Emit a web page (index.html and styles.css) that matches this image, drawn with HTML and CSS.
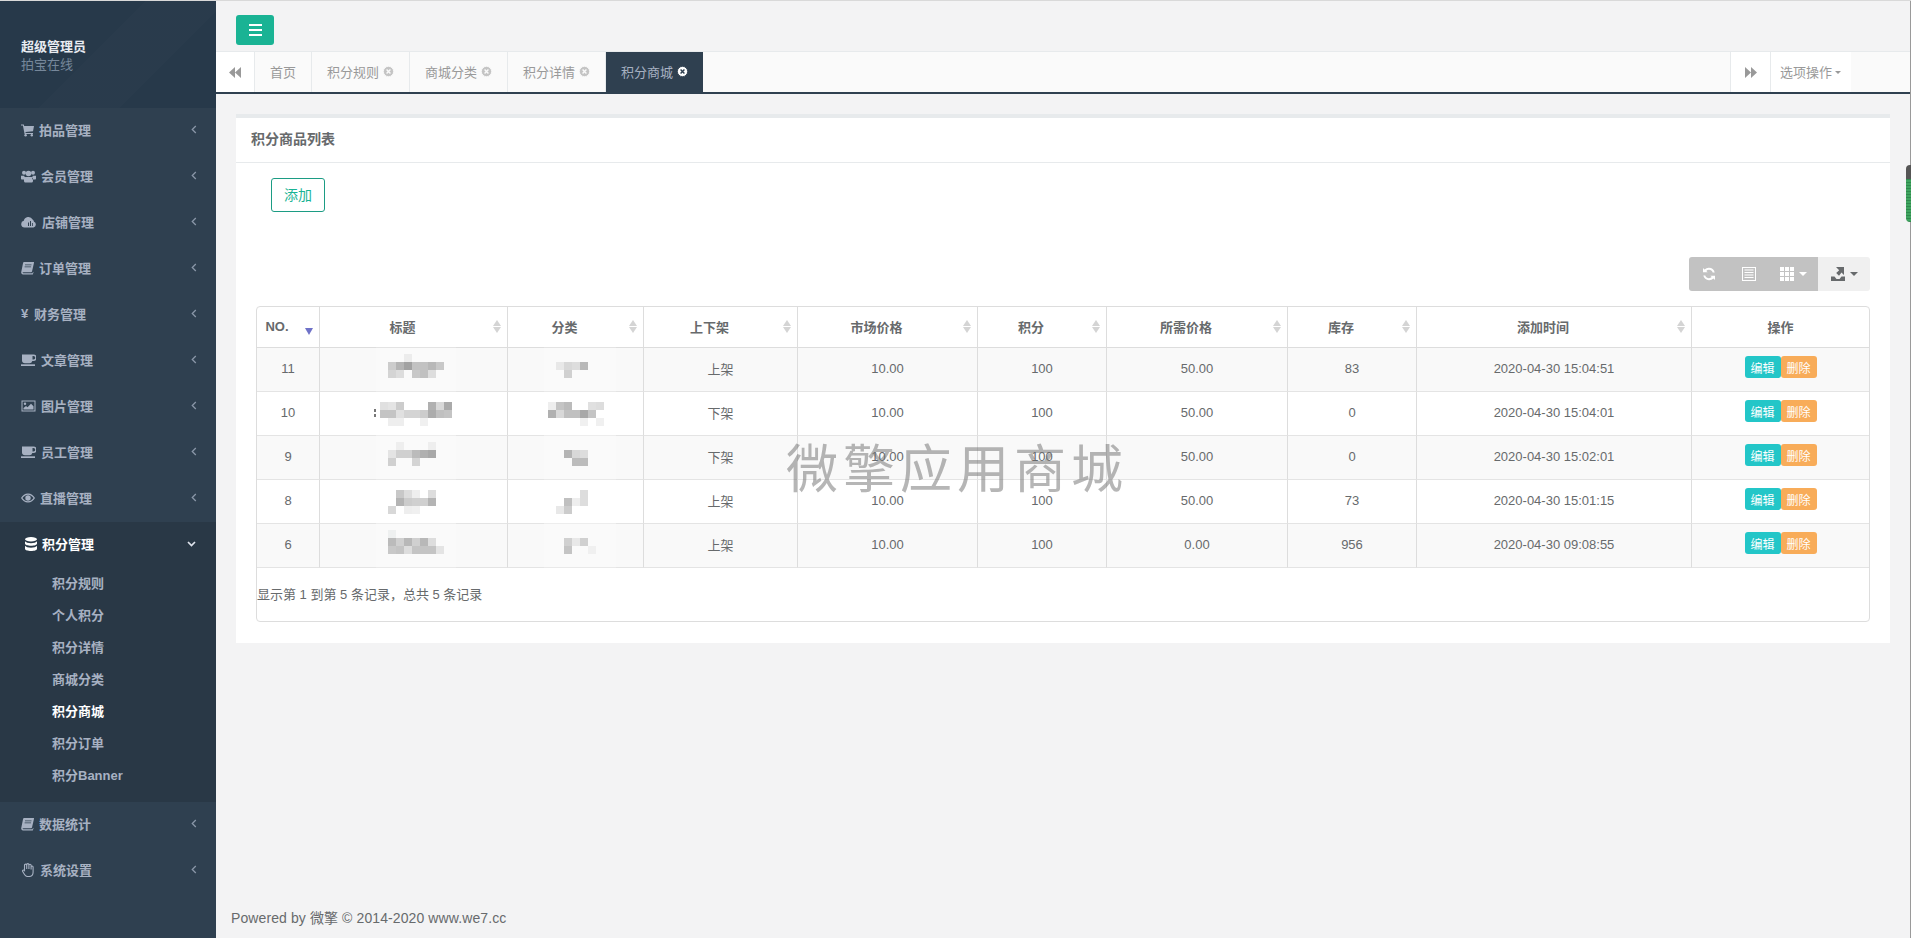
FILE: index.html
```html
<!DOCTYPE html>
<html lang="en">
<head>
    <meta charset="UTF-8">
    <title>积分商城</title>
    <link rel="stylesheet" href="styles.css">
</head>
<body>

    <!-- icon sprite -->
    <svg class="sprite" xmlns="http://www.w3.org/2000/svg">
        <symbol id="i-cart" viewBox="0 0 13 13"><path d="M0 1h2.8l.4 1.500H13l-1 5.300-7.600.8.300 1H12v1H3.600L1.900 2.100H0z"/><circle cx="4.600" cy="11.800" r="1.200"/><circle cx="10.800" cy="11.800" r="1.200"/></symbol>
        <symbol id="i-users" viewBox="0 0 15 13"><circle cx="3" cy="3.200" r="2"/><circle cx="12" cy="3.200" r="2"/><circle cx="7.500" cy="4" r="2.800"/><path d="M0 6.200h3.200L4 8.500 3.500 10H1C.3 10 0 9.500 0 9zM15 6.200h-3.200L11 8.500l.5 1.500H14c.7 0 1-.5 1-1zM4.500 7.500h6c.9 0 1.500 1 1.500 2.500v1.500c0 .8-.5 1.500-1.500 1.500h-6c-1 0-1.500-.7-1.500-1.500V10c0-1.500.6-2.500 1.500-2.500z"/></symbol>
        <symbol id="i-cloud" viewBox="0 0 16 12"><path fill-rule="evenodd" d="M3.500 11.500a3.400 3.400 0 0 1-.7-6.700A4.700 4.700 0 0 1 11.600 3.600 3 3 0 0 1 13 5.800a3 3 0 0 1-.5 5.700zM7 6.500V10h1V6.500zM9 5v5h1V5zM11 7v3h.8V7z"/></symbol>
        <symbol id="i-book" viewBox="0 0 13 13"><path fill-rule="evenodd" d="M3 .5h9.500c.5 0 .6.400.5.800l-2 8.700c-.1.400-.4.700-.9.700H2.500c-.7 0-1 .4-1 .6 0 .3.300.5.800.5h9.200l.5-1.600.5.500-.7 2.200H2c-1.100 0-1.800-.8-1.800-1.800 0-.3 0-.6.100-.8L2 1.700C2.200 1 2.500.5 3 .5zM4 3v.8h6.500V3zM3.600 5v.8h6.500V5z"/></symbol>
        <symbol id="i-coffee" viewBox="0 0 15 13"><path fill-rule="evenodd" d="M1 1h11.500a2.500 2.500 0 0 1 0 6.500h-1.200A3 3 0 0 1 8.500 9.800H4A3 3 0 0 1 1 7zM11.500 2.500v3.500h1a1.700 1.700 0 0 0 0-3.500z"/><path d="M0 10.800h14v1.700H0z"/></symbol>
        <symbol id="i-picture" viewBox="0 0 15 13"><path fill-rule="evenodd" d="M.5 1h14v11H.5zM1.500 2v9h12V2z"/><circle cx="4" cy="4.300" r="1.200"/><path d="M2.500 10V8.500L5 6.500l1.500 1.200 3.500-3.500 2.500 2.500V10z"/></symbol>
        <symbol id="i-eye" viewBox="0 0 14 10"><path fill-rule="evenodd" d="M7 .5c3 0 5.500 1.800 7 4.500-1.500 2.700-4 4.500-7 4.500S1.500 7.700 0 5C1.500 2.300 4 .5 7 .5zM7 1.700C4.800 1.700 2.800 3 1.400 5 2.800 7 4.800 8.300 7 8.300S11.200 7 12.600 5C11.200 3 9.200 1.700 7 1.700z"/><circle cx="7" cy="5" r="2.700"/></symbol>
        <symbol id="i-database" viewBox="0 0 12 14"><ellipse cx="6" cy="2.200" rx="6" ry="2.200"/><path d="M0 4.200c.8 1.300 3.300 2 6 2s5.200-.7 6-2v2.200c0 1.300-2.700 2.300-6 2.300S0 7.700 0 6.400zM0 8.800c.8 1.300 3.300 2 6 2s5.200-.7 6-2v2.900c0 1.300-2.700 2.300-6 2.300s-6-1-6-2.300z"/></symbol>
        <symbol id="i-hand" viewBox="0 0 13 14"><path fill="none" stroke="currentColor" stroke-width="1.100" d="M3 7V2.200a1.100 1.100 0 0 1 2.200 0V6V1.700a1.100 1.100 0 0 1 2.200 0V6V2.300a1.100 1.100 0 0 1 2.200 0V6.500V4a1 1 0 0 1 2 0v5c0 2.500-1.300 4.500-4 4.500H6c-1.500 0-2.200-.7-3-2L1.200 8.500C.6 7.500 2 6.300 3 7.500z"/></symbol>
        <symbol id="i-left" viewBox="0 0 6 9"><path fill="none" stroke="currentColor" stroke-width="1.300" d="M4.800 1 1.300 4.500 4.800 8"/></symbol>
        <symbol id="i-down" viewBox="0 0 9 6"><path fill="none" stroke="currentColor" stroke-width="1.700" d="M1 1l3.500 3.500L8 1"/></symbol>
        <symbol id="i-close" viewBox="0 0 12 12"><circle cx="6" cy="6" r="5.600"/><path class="x-mark" d="M3.900 3.900l4.200 4.200M8.100 3.900 3.900 8.100"/></symbol>
        <symbol id="i-back" viewBox="0 0 12 11"><path d="M6 0v11L0 5.500zM12 0v11L6 5.500z"/></symbol>
        <symbol id="i-forward" viewBox="0 0 12 11"><path d="M0 0v11l6-5.500zM6 0v11l6-5.500z"/></symbol>
        <symbol id="i-refresh" viewBox="0 0 14 14"><path d="M12.700 5.500h-2c-.6-1.700-2-2.700-3.700-2.700-1.100 0-2 .4-2.700 1.100l1.400 1.400H1V1l1.500 1.500A6.300 6.300 0 0 1 7 .8c2.900 0 5.200 2 5.700 4.700zM1.300 8.500h2c.6 1.700 2 2.700 3.700 2.700 1.100 0 2-.4 2.700-1.100L8.300 8.700H13V13l-1.500-1.500A6.300 6.300 0 0 1 7 13.200c-2.900 0-5.200-2-5.700-4.700z"/></symbol>
        <symbol id="i-list" viewBox="0 0 14 14"><path fill-rule="evenodd" d="M0 0h14v14H0zM1 1v12h12V1zM2.500 2.500h9v1h-9zM2.500 5h9v1h-9zM2.500 7.500h9v1h-9zM2.500 10h9v1h-9z"/></symbol>
        <symbol id="i-grid" viewBox="0 0 14 14"><path d="M0 0h4v4H0zM5 0h4v4H5zM10 0h4v4h-4zM0 5h4v4H0zM5 5h4v4H5zM10 5h4v4h-4zM0 10h4v4H0zM5 10h4v4H5zM10 10h4v4h-4z"/></symbol>
        <symbol id="i-export" viewBox="0 0 14 14"><path d="M0 14v-4.500h3.500L5.500 12h3l2-2.500H14V14zM5 0h8v8l-2.500-2.400L8 8.800 5.200 6l3-2.700z"/></symbol>
    </svg>

    <div class="page">
        <aside class="sidebar">
            <div class="profile">
                <strong>超级管理员</strong>
                <span>拍宝在线</span>
            </div>
            <ul class="menu">
                <li class="menu-item"><svg class="icon w13"><use href="#i-cart"/></svg><span>拍品管理</span><svg class="chev"><use href="#i-left"/></svg></li>
                <li class="menu-item"><svg class="icon w15"><use href="#i-users"/></svg><span>会员管理</span><svg class="chev"><use href="#i-left"/></svg></li>
                <li class="menu-item"><svg class="icon w16"><use href="#i-cloud"/></svg><span>店铺管理</span><svg class="chev"><use href="#i-left"/></svg></li>
                <li class="menu-item"><svg class="icon w13"><use href="#i-book"/></svg><span>订单管理</span><svg class="chev"><use href="#i-left"/></svg></li>
                <li class="menu-item"><b class="yen">¥</b><span>财务管理</span><svg class="chev"><use href="#i-left"/></svg></li>
                <li class="menu-item"><svg class="icon w15"><use href="#i-coffee"/></svg><span>文章管理</span><svg class="chev"><use href="#i-left"/></svg></li>
                <li class="menu-item"><svg class="icon w15"><use href="#i-picture"/></svg><span>图片管理</span><svg class="chev"><use href="#i-left"/></svg></li>
                <li class="menu-item"><svg class="icon w15"><use href="#i-coffee"/></svg><span>员工管理</span><svg class="chev"><use href="#i-left"/></svg></li>
                <li class="menu-item"><svg class="icon w14"><use href="#i-eye"/></svg><span>直播管理</span><svg class="chev"><use href="#i-left"/></svg></li>
                <li class="menu-group">
                    <div class="menu-item open"><svg class="icon w12"><use href="#i-database"/></svg><span>积分管理</span><svg class="chev-down"><use href="#i-down"/></svg></div>
                    <ul class="submenu">
                        <li>积分规则</li>
                        <li>个人积分</li>
                        <li>积分详情</li>
                        <li>商城分类</li>
                        <li class="current">积分商城</li>
                        <li>积分订单</li>
                        <li>积分Banner</li>
                    </ul>
                </li>
                <li class="menu-item"><svg class="icon w13"><use href="#i-book"/></svg><span>数据统计</span><svg class="chev"><use href="#i-left"/></svg></li>
                <li class="menu-item"><svg class="icon w14"><use href="#i-hand"/></svg><span>系统设置</span><svg class="chev"><use href="#i-left"/></svg></li>
            </ul>
        </aside>

        <div class="main">
            <div class="topbar">
                <button class="menu-toggle"><i></i><i></i><i></i></button>
            </div>

            <div class="tabs">
                <div class="tab-arrow"><svg class="arrow-icon"><use href="#i-back"/></svg></div>
                <div class="tab">首页</div>
                <div class="tab">积分规则<svg class="close"><use href="#i-close"/></svg></div>
                <div class="tab">商城分类<svg class="close"><use href="#i-close"/></svg></div>
                <div class="tab">积分详情<svg class="close"><use href="#i-close"/></svg></div>
                <div class="tab active">积分商城<svg class="close"><use href="#i-close"/></svg></div>
                <div class="tab-arrow right"><svg class="arrow-icon"><use href="#i-forward"/></svg></div>
                <div class="tab-options">选项操作<em class="caret"></em></div>
            </div>

            <div class="content">
                <div class="panel">
                    <h5 class="panel-title">积分商品列表</h5>
                    <div class="panel-body">
                        <button class="btn-add">添加</button>

                        <div class="toolbar">
                            <div class="tool-group">
                                <button class="tool t-refresh"><svg class="tool-icon"><use href="#i-refresh"/></svg></button>
                                <button class="tool t-list"><svg class="tool-icon"><use href="#i-list"/></svg></button>
                                <button class="tool t-grid"><svg class="tool-icon"><use href="#i-grid"/></svg><em class="caret"></em></button>
                            </div>
                            <button class="tool t-export"><svg class="tool-icon"><use href="#i-export"/></svg><em class="caret"></em></button>
                        </div>

                        <div class="table-wrap">
                            <table class="table">
                                <colgroup>
                                    <col class="c1"><col class="c2"><col class="c3"><col class="c4"><col class="c5">
                                    <col class="c6"><col class="c7"><col class="c8"><col class="c9"><col class="c10">
                                </colgroup>
                                <thead>
                                    <tr>
                                        <th class="sorted">NO.</th>
                                        <th>标题</th>
                                        <th>分类</th>
                                        <th>上下架</th>
                                        <th>市场价格</th>
                                        <th>积分</th>
                                        <th>所需价格</th>
                                        <th>库存</th>
                                        <th>添加时间</th>
                                        <th class="plain">操作</th>
                                    </tr>
                                </thead>
                                <tbody>
                                    <tr>
                                        <td>11</td>
                                        <td class="blur"><svg class="mosaic title" viewBox="-.5 0 10 6">
                                            <rect x="3" y="1" fill="#ececec"/><rect x="1" y="2" fill="#ccc"/><rect x="2" y="2" fill="#b4b4b4"/><rect x="3" y="2" fill="#a2a2a2"/><rect x="4" y="2" fill="#c2c2c2"/><rect x="5" y="2" fill="#c2c2c2"/><rect x="6" y="2" fill="#b8b8b8"/><rect x="7" y="2" fill="#c8c8c8"/><rect x="1" y="3" fill="#d4d4d4"/><rect x="2" y="3" fill="#ddd"/><rect x="4" y="3" fill="#c8c8c8"/><rect x="5" y="3" fill="#c0c0c0"/><rect x="6" y="3" fill="#ddd"/>
                                        </svg></td>
                                        <td class="blur"><svg class="mosaic cat" viewBox="-.5 0 9 6">
                                            <rect x="1" y="2" fill="#e8e8e8"/><rect x="2" y="2" fill="#d8d8d8"/><rect x="3" y="2" fill="#ddd"/><rect x="4" y="2" fill="#b8b8b8"/><rect x="2" y="3" fill="#d0d0d0"/>
                                        </svg></td>
                                        <td>上架</td><td>10.00</td><td>100</td><td>50.00</td><td>83</td><td>2020-04-30 15:04:51</td>
                                        <td class="actions"><button class="btn-edit">编辑</button><button class="btn-del">删除</button></td>
                                    </tr>
                                    <tr>
                                        <td>10</td>
                                        <td class="blur"><svg class="mosaic title low" viewBox="-.5 0 10 6">
                                            <path d="M-.75 1.900h.25v.3h-.25zM-.75 2.500h.25v.4h-.25z" fill="#777"/>
                                            <rect x="0" y="1" fill="#e0e0e0"/><rect x="1" y="1" fill="#e4e4e4"/><rect x="2" y="1" fill="#ccc"/><rect x="6" y="1" fill="#b0b0b0"/><rect x="7" y="1" fill="#d8d8d8"/><rect x="8" y="1" fill="#aaa"/><rect x="0" y="2" fill="#c4c4c4"/><rect x="1" y="2" fill="#c4c4c4"/><rect x="2" y="2" fill="#e0e0e0"/><rect x="3" y="2" fill="#d4d4d4"/><rect x="4" y="2" fill="#d4d4d4"/><rect x="5" y="2" fill="#ccc"/><rect x="6" y="2" fill="#acacac"/><rect x="7" y="2" fill="#c0c0c0"/><rect x="8" y="2" fill="#c4c4c4"/><rect x="1" y="3" fill="#eee"/><rect x="2" y="3" fill="#eee"/><rect x="5" y="3" fill="#f0f0f0"/>
                                        </svg></td>
                                        <td class="blur"><svg class="mosaic cat low" viewBox="-.5 0 9 6">
                                            <rect x="0" y="1" fill="#eee"/><rect x="1" y="1" fill="#c4c4c4"/><rect x="2" y="1" fill="#bbb"/><rect x="5" y="1" fill="#e0e0e0"/><rect x="6" y="1" fill="#ddd"/><rect x="0" y="2" fill="#b0b0b0"/><rect x="1" y="2" fill="#d8d8d8"/><rect x="2" y="2" fill="#c0c0c0"/><rect x="3" y="2" fill="#c0c0c0"/><rect x="4" y="2" fill="#a8a8a8"/><rect x="5" y="2" fill="#c4c4c4"/><rect x="4" y="3" fill="#f0f0f0"/><rect x="6" y="3" fill="#f0f0f0"/>
                                        </svg></td>
                                        <td>下架</td><td>10.00</td><td>100</td><td>50.00</td><td>0</td><td>2020-04-30 15:04:01</td>
                                        <td class="actions"><button class="btn-edit">编辑</button><button class="btn-del">删除</button></td>
                                    </tr>
                                    <tr>
                                        <td>9</td>
                                        <td class="blur"><svg class="mosaic title" viewBox="-.5 0 10 6">
                                            <rect x="2" y="1" fill="#eee"/><rect x="6" y="1" fill="#eee"/><rect x="1" y="2" fill="#e4e4e4"/><rect x="2" y="2" fill="#d0d0d0"/><rect x="3" y="2" fill="#d0d0d0"/><rect x="4" y="2" fill="#bbb"/><rect x="5" y="2" fill="#b0b0b0"/><rect x="6" y="2" fill="#a8a8a8"/><rect x="1" y="3" fill="#d0d0d0"/><rect x="4" y="3" fill="#d4d4d4"/>
                                        </svg></td>
                                        <td class="blur"><svg class="mosaic cat" viewBox="-.5 0 9 6">
                                            <rect x="2" y="2" fill="#b4b4b4"/><rect x="3" y="2" fill="#d8d8d8"/><rect x="4" y="2" fill="#ddd"/><rect x="3" y="3" fill="#bcbcbc"/><rect x="4" y="3" fill="#bcbcbc"/>
                                        </svg></td>
                                        <td>下架</td><td>10.00</td><td>100</td><td>50.00</td><td>0</td><td>2020-04-30 15:02:01</td>
                                        <td class="actions"><button class="btn-edit">编辑</button><button class="btn-del">删除</button></td>
                                    </tr>
                                    <tr>
                                        <td>8</td>
                                        <td class="blur"><svg class="mosaic title low" viewBox="-.5 0 10 6">
                                            <rect x="2" y="1" fill="#c8c8c8"/><rect x="3" y="1" fill="#ddd"/><rect x="4" y="1" fill="#eee"/><rect x="6" y="1" fill="#ddd"/><rect x="2" y="2" fill="#b4b4b4"/><rect x="3" y="2" fill="#ccc"/><rect x="4" y="2" fill="#d0d0d0"/><rect x="5" y="2" fill="#d0d0d0"/><rect x="6" y="2" fill="#b4b4b4"/><rect x="1" y="3" fill="#d8d8d8"/><rect x="3" y="3" fill="#eee"/><rect x="4" y="3" fill="#f0f0f0"/>
                                        </svg></td>
                                        <td class="blur"><svg class="mosaic cat low" viewBox="-.5 0 9 6">
                                            <rect x="4" y="1" fill="#ddd"/><rect x="2" y="2" fill="#c0c0c0"/><rect x="3" y="2" fill="#eee"/><rect x="4" y="2" fill="#ddd"/><rect x="1" y="3" fill="#e8e8e8"/><rect x="2" y="3" fill="#ccc"/>
                                        </svg></td>
                                        <td>上架</td><td>10.00</td><td>100</td><td>50.00</td><td>73</td><td>2020-04-30 15:01:15</td>
                                        <td class="actions"><button class="btn-edit">编辑</button><button class="btn-del">删除</button></td>
                                    </tr>
                                    <tr>
                                        <td>6</td>
                                        <td class="blur"><svg class="mosaic title" viewBox="-.5 0 10 6">
                                            <rect x="1" y="1" fill="#eef0f0"/><rect x="1" y="2" fill="#bbb"/><rect x="2" y="2" fill="#d0d0d0"/><rect x="3" y="2" fill="#b8b8b8"/><rect x="4" y="2" fill="#d0d0d0"/><rect x="5" y="2" fill="#b8b8b8"/><rect x="6" y="2" fill="#ddd"/><rect x="1" y="3" fill="#c8c8c8"/><rect x="2" y="3" fill="#c4c4c4"/><rect x="3" y="3" fill="#ddd"/><rect x="4" y="3" fill="#c4c4c4"/><rect x="5" y="3" fill="#c4c4c4"/><rect x="6" y="3" fill="#c4c4c4"/><rect x="7" y="3" fill="#e4e4e4"/>
                                        </svg></td>
                                        <td class="blur"><svg class="mosaic cat" viewBox="-.5 0 9 6">
                                            <rect x="2" y="2" fill="#d0d0d0"/><rect x="3" y="2" fill="#e8e8e8"/><rect x="4" y="2" fill="#d0d0d0"/><rect x="2" y="3" fill="#c4c4c4"/><rect x="5" y="3" fill="#f0f0f0"/>
                                        </svg></td>
                                        <td>上架</td><td>10.00</td><td>100</td><td>0.00</td><td>956</td><td>2020-04-30 09:08:55</td>
                                        <td class="actions"><button class="btn-edit">编辑</button><button class="btn-del">删除</button></td>
                                    </tr>
                                </tbody>
                            </table>
                            <div class="table-info">显示第 1 到第 5 条记录，总共 5 条记录</div>
                        </div>
                    </div>
                </div>
            </div>

            <div class="footer">Powered by 微擎 © 2014-2020 www.we7.cc</div>
        </div>
    </div>

    <div class="watermark">微擎应用商城</div>
    <div class="side-handle"></div>

</body>
</html>
```

FILE: styles.css
```css
* {
    box-sizing: border-box;
}

html, body {
    margin: 0;
    height: 100%;
    overflow: hidden;
}

body {
    font-family: "Liberation Sans", "Noto Sans CJK SC", sans-serif;
    font-size: 13px;
    color: #676a6c;
    background-color: #f3f3f4;
    border-top: 1px solid #d9d9d9;
}

ul {
    list-style: none;
    margin: 0;
    padding: 0;
}

button {
    font-family: inherit;
    border: none;
    padding: 0;
}

.sprite {
    display: none;
}

.page {
    display: flex;
    height: 937px;
}

/* sidebar */
.sidebar {
    width: 216px;
    flex: none;
    background-color: #2f4050;
    color: #a7b1c2;
}

.profile {
    height: 107px;
    padding: 37px 21px 0;
    background-color: #27394a;
    background-image: linear-gradient(135deg, rgba(255, 255, 255, 0) 45%, rgba(255, 255, 255, 0.012) 45%, rgba(255, 255, 255, 0.012) 70%, rgba(0, 0, 0, 0) 70%);
    line-height: 18px;
}

.profile strong {
    display: block;
    color: #e8ebf1;
}

.profile span {
    display: block;
    color: #76879a;
}

.menu-item {
    display: flex;
    align-items: center;
    gap: 5px;
    height: 46px;
    padding: 0 21px 3px;
    font-weight: 700;
}

.menu-item span {
    flex: 1;
}

.icon {
    height: 14px;
    fill: currentColor;
}

.w12 { width: 12px; }
.w13 { width: 13px; }
.w14 { width: 14px; }
.w15 { width: 15px; }
.w16 { width: 16px; }

.yen {
    width: 8px;
    font-size: 13px;
}

.chev {
    width: 6px;
    height: 9px;
    margin-right: -2px;
    color: #8a96a8;
}

.chev-down {
    width: 9px;
    height: 6px;
    margin-right: -1px;
    color: #dfe4ed;
}

.menu-group {
    background-color: #293846;
    height: 280px;
}

.menu-item.open {
    color: #fff;
    padding-left: 25px;
}

.submenu li {
    height: 32px;
    line-height: 32px;
    padding-left: 52px;
    font-weight: 700;
    color: #a7b1c2;
}

.submenu .current {
    color: #fff;
}

/* top */
.main {
    flex: 1;
    display: flex;
    flex-direction: column;
    border-right: 1px solid #9a9a9a;
}

.topbar {
    height: 50px;
    padding: 14px 20px 0;
}

.menu-toggle {
    display: flex;
    flex-direction: column;
    align-items: center;
    justify-content: center;
    gap: 3px;
    width: 38px;
    height: 30px;
    background-color: #1ab394;
    border-radius: 3px;
}

.menu-toggle i {
    display: block;
    width: 13px;
    height: 2px;
    background-color: #fff;
}

.tabs {
    display: flex;
    height: 43px;
    background-color: #fafafa;
    border-top: 1px solid #e7eaec;
    border-bottom: 2px solid #2f4050;
}

.tab-arrow {
    width: 39px;
    display: flex;
    align-items: center;
    justify-content: center;
    background-color: #fff;
    border-right: 1px solid #e7eaec;
    color: #999;
}

.tab-arrow.right {
    width: 41px;
    margin-left: auto;
    border-left: 1px solid #e7eaec;
}

.arrow-icon {
    width: 12px;
    height: 11px;
    fill: currentColor;
}

.tab {
    display: flex;
    align-items: center;
    gap: 4px;
    padding: 0 15px 2px;
    color: #999;
    border-right: 1px solid #e7eaec;
}

.tab:first-of-type {
    width: 57px;
}

.tab.active {
    background-color: #2f4050;
    color: #a7b1c2;
    border-right: none;
}

.close {
    width: 11px;
    height: 11px;
    margin-top: 1px;
    fill: #c4c4c4;
    stroke: #fafafa;
}

.tab.active .close {
    fill: #fff;
    stroke: #2f4050;
}

.x-mark {
    stroke-width: 1.6;
}

.tab-options {
    width: 80px;
    margin-right: 59px;
    padding: 0 0 2px 9px;
    display: flex;
    align-items: center;
    gap: 3px;
    background-color: #fff;
    color: #999;
}

.caret {
    display: inline-block;
    width: 0;
    height: 0;
    border-top: 4px solid currentColor;
    border-left: 4px solid transparent;
    border-right: 4px solid transparent;
}

.tab-options .caret {
    border-top-width: 3px;
    border-left-width: 3.5px;
    border-right-width: 3.5px;
    margin-top: 2px;
}

/* panel */
.content {
    flex: 1;
    padding: 20px 20px 0;
}

.panel {
    background-color: #fff;
    border-top: 4px solid #e7eaec;
}

.panel-title {
    margin: 0;
    height: 45px;
    padding: 0 15px;
    line-height: 42px;
    font-size: 14px;
    font-weight: 700;
    color: #676a6c;
    border-bottom: 1px solid #e7eaec;
}

.panel-body {
    padding: 15px 20px 21px;
}

.btn-add {
    display: block;
    width: 54px;
    height: 34px;
    margin-left: 15px;
    padding-bottom: 2px;
    background-color: #fff;
    border: 1px solid #1c9c84;
    border-radius: 3px;
    color: #1ab394;
    font-size: 14px;
}

.toolbar {
    display: flex;
    justify-content: flex-end;
    margin-top: 45px;
    margin-bottom: 15px;
}

.tool-group {
    display: flex;
    background-color: #c2c2c2;
    border-radius: 3px 0 0 3px;
}

.tool {
    display: flex;
    align-items: center;
    justify-content: center;
    gap: 5px;
    height: 34px;
    background: none;
    color: #fff;
}

.t-refresh { width: 40px; }
.t-list { width: 39px; }
.t-grid { width: 50px; }

.t-export {
    width: 52px;
    background-color: #f0f0f0;
    border-radius: 0 3px 3px 0;
    color: #676a6c;
}

.tool-icon {
    width: 14px;
    height: 14px;
    fill: currentColor;
}

/* table */
.table-wrap {
    border: 1px solid #ddd;
    border-radius: 4px;
    height: 316px;
}

.table {
    table-layout: fixed;
    width: 100%;
    border-collapse: separate;
    border-spacing: 0;
}

.c1 { width: 63px; }
.c2 { width: 188px; }
.c3 { width: 136px; }
.c4 { width: 154px; }
.c5 { width: 180px; }
.c6 { width: 129px; }
.c7 { width: 181px; }
.c8 { width: 129px; }
.c9 { width: 275px; }

.table th,
.table td {
    text-align: center;
    font-size: 13px;
    border-right: 1px solid #ddd;
    border-bottom: 1px solid #e4e4e4;
    padding: 0 0 2px;
}

.table th:last-child,
.table td:last-child {
    border-right: none;
}

.table th {
    position: relative;
    height: 41px;
    padding-right: 22px;
    border-bottom-color: #ddd;
}

/* sort arrows */
.table th::before,
.table th::after {
    content: "";
    position: absolute;
    right: 6px;
    border-left: 4px solid transparent;
    border-right: 4px solid transparent;
}

.table th::before {
    top: 13px;
    border-bottom: 6px solid #d4d4d4;
}

.table th::after {
    top: 20px;
    border-top: 6px solid #d4d4d4;
}

.table th.plain {
    padding-right: 0;
}

.table th.plain::before,
.table th.plain::after {
    display: none;
}

.table th.sorted::before {
    display: none;
}

.table th.sorted::after {
    top: 21px;
    border-top: 7px solid #6f72c8;
}

.table td {
    height: 44px;
    position: relative;
}

.table tbody tr:nth-child(odd) td {
    background-color: #f9f9f9;
}

.mosaic {
    position: absolute;
    top: -2px;
    height: 48px;
    background-color: rgba(255, 255, 255, 0.2);
    shape-rendering: crispEdges;
    overflow: visible;
}

.mosaic.low {
    top: 2px;
}

.mosaic.title {
    left: 56px;
    width: 80px;
}

.mosaic.cat {
    left: 36px;
    width: 72px;
}

.mosaic rect {
    width: 1px;
    height: 1px;
}

.table .actions {
    padding-bottom: 5px;
}

.actions button {
    width: 36px;
    height: 22px;
    color: #fff;
    font-size: 12px;
    border-radius: 3px;
    vertical-align: middle;
}

.btn-edit {
    background-color: #23c6c8;
}

.btn-del {
    background-color: #f8ac59;
}

.table-info {
    padding-top: 16px;
    line-height: 21px;
}

.footer {
    height: 24px;
    padding-left: 15px;
    margin-bottom: 6px;
    font-size: 14px;
    letter-spacing: 0.1px;
    line-height: 20px;
}

/* overlays */
.watermark {
    position: absolute;
    left: 786px;
    top: 431px;
    font-family: "Noto Sans CJK SC", sans-serif;
    font-size: 52px;
    letter-spacing: 5px;
    line-height: 70px;
    white-space: nowrap;
    color: rgba(110, 110, 110, 0.5);
}

.side-handle {
    position: absolute;
    right: 0;
    top: 165px;
    width: 5px;
    height: 57px;
    border-radius: 4px 0 0 4px;
    background: linear-gradient(#555 0, #555 14px, transparent 14px), repeating-linear-gradient(#3fa45f 0, #3fa45f 2px, #2f8a4d 2px, #2f8a4d 3px);
}
```
